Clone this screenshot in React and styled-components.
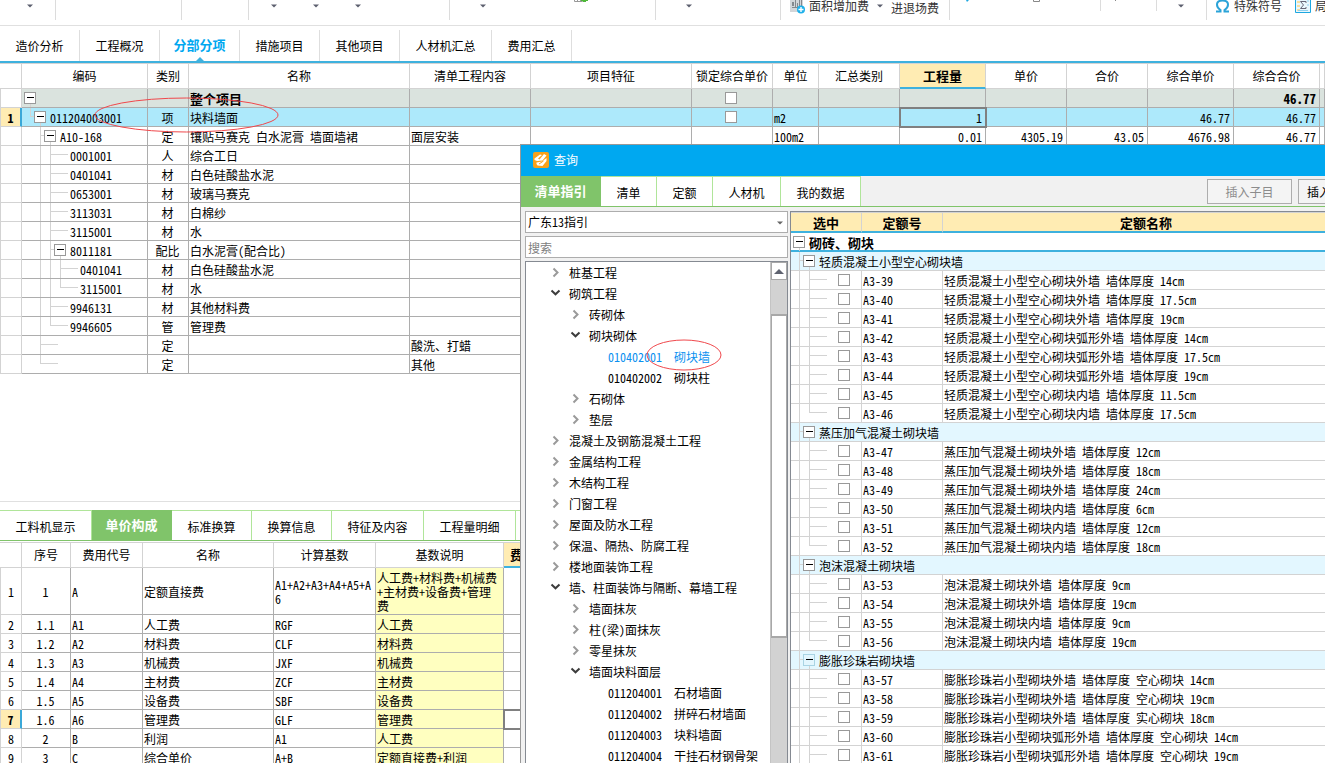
import React from "react";
import styled, { createGlobalStyle, css } from "styled-components";

const c = {
  sky: "#3eb1de",
  azure: "#00a8f0",
  green: "#80c46a",
  paleGreen: "#b0e59a",
  cream: "#ffecb3",
  line: "#adadad",
  light: "#d3d3d3",
};

const Global = createGlobalStyle`
  *, *::before, *::after { box-sizing: border-box; }
  body {
    margin: 0;
    background: #fff;
    color: #000;
    overflow: hidden;
    font-family: "Noto Sans Mono CJK SC", "Liberation Serif", "Noto Sans CJK SC", monospace;
    font-size: 12px;
    line-height: 18px;
  }
  button, input, select { font: inherit; color: inherit; margin: 0; padding: 0; }
`;

const Page = styled.div`
  position: relative;
  display: flex;
  flex-direction: column;
  height: 100vh;
  overflow: hidden;
`;

/* ---------- ribbon ---------- */

const Ribbon = styled.header`
  display: flex;
  flex: none;
  height: 26px;
  border-bottom: 1px solid #e0e0e0;
  overflow: hidden;
  color: #333;
`;

const RibbonGroup = styled.div`
  display: flex;
  flex: none;
  align-items: flex-start;
  width: ${(p) => p.$w}px;
  height: ${(p) => (p.$short ? 11 : 20)}px;
  border-right: 1px solid #dcdcdc;
  padding-left: ${(p) => p.$pad || 0}px;
  gap: ${(p) => p.$gap || 0}px;
`;

const RibbonTail = styled(RibbonGroup)`
  flex: 1 0 auto;
  border-right: 0;
  height: 20px;
`;

const RibbonButton = styled.button`
  display: flex;
  align-items: flex-start;
  flex: none;
  height: 16px;
  gap: 4px;
  border: 0;
  background: none;
  line-height: 12px;
  white-space: nowrap;
`;

const RibbonLabel = styled.span`
  line-height: ${(p) => (p.$low ? 16 : 12)}px;
`;

const CaretButton = styled.button`
  display: flex;
  flex: none;
  width: 6px;
  height: 8px;
  border: 0;
  background: none;
  padding-top: 4px;
`;

const Caret = () => (
  <CaretButton aria-label="展开">
    <svg width="6" height="4" viewBox="0 0 6 4">
      <path d="M0 0.500h6L3 3.500z" fill="#5c5f6e" />
    </svg>
  </CaretButton>
);

const SheetIcon = () => (
  <svg width="14" height="3" viewBox="0 0 14 3">
    <path d="M0.500 0v1.500h8V0M3.500 0v1M6.500 0v1" fill="none" stroke="#999" />
    <path d="M7 0h7v1h-2v1H9V1H7z" fill="#4fb83a" />
  </svg>
);

const AreaIcon = () => (
  <svg width="15" height="14" viewBox="0 0 15 14">
    <path d="M0 0h13v12H0z" fill="#d3d6d9" />
    <path d="M2 2h2v4H2zM5 0h1v7H5zM7 3h1v4H7zM9 0h1v6H9zM11 0h1v6h-1zM2 7h6v1H2z" fill="#84888d" />
    <circle cx="11" cy="9.500" r="4" fill="#1eb0ea" />
    <path d="M11 7v5M8.500 9.500h5" stroke="#fff" strokeWidth="1.400" />
  </svg>
);

const OmegaIcon = () => (
  <svg width="15" height="13" viewBox="0 0 15 13">
    <path
      d="M1 11.500h4.500V10C3 8.500 2 6.800 2 4.800 2 2 4.500 0.500 7.500 0.500S13 2 13 4.800c0 2-1 3.700-3.500 5.200v1.500H14"
      fill="none"
      stroke="#2ba3d8"
      strokeWidth="2"
    />
  </svg>
);

const SigmaIcon = () => (
  <svg width="16" height="13" viewBox="0 0 16 13">
    <path d="M0.500 0v12.500h15V0" fill="#e9f7fd" stroke="#1ea7e0" />
    <path d="M2 1h3v2H2zM2 5h3v2H2zM2 9h3v2H2z" fill="#f5dfa0" />
    <path d="M11 3V1.500H5.500L8.500 5l-3 3.500H11V7" fill="none" stroke="#667" />
    <path d="M12 1h2M12 5h2M3 10.500h10" stroke="#8fd0ee" />
  </svg>
);

/* ---------- tabs ---------- */

const MainTabs = styled.nav`
  display: flex;
  flex: none;
  height: 37px;
  padding-top: 4px;
  border-bottom: 2px solid ${c.sky};
`;

const MainTab = styled.button`
  position: relative;
  width: ${(p) => p.$w}px;
  height: 31px;
  border: 0;
  border-right: 1px solid #dedede;
  background: none;
  padding-top: 1px;
  ${(p) =>
    p.$active &&
    css`
      color: ${c.azure};
      font-weight: 700;
      font-size: 13px;
      padding: 0 0 1px;
      &::after {
        content: "";
        position: absolute;
        left: 50%;
        bottom: 0;
        margin-left: -4px;
        border: 4px solid transparent;
        border-top: 0;
        border-bottom-color: ${c.sky};
      }
    `}
`;

const GreenTabs = styled.nav`
  display: flex;
  flex: none;
  height: 31px;
  border-bottom: 1px solid ${c.green};
  ${(p) => p.$lined && `box-shadow: inset 0 1px 0 ${c.paleGreen};`}
`;

const GreenTab = styled.button`
  flex: none;
  width: ${(p) => p.$w}px;
  height: 30px;
  border: 0;
  border-top: 1px solid ${c.paleGreen};
  border-right: 1px solid ${c.paleGreen};
  background: #fff;
  padding-top: 3px;
  ${(p) =>
    p.$active &&
    css`
      background: ${c.green};
      border-color: ${c.green};
      color: #fff;
      font-weight: 700;
      font-size: 13px;
      padding: 0 0 1px;
    `}
`;

/* ---------- data grids ---------- */

const Grid = styled.table`
  width: 100%;
  table-layout: fixed;
  border-collapse: separate;
  border-spacing: 0;
  border-top: 1px solid ${c.light};
`;

const Head = styled.th`
  height: 25px;
  padding: 0;
  border-right: 1px solid ${c.light};
  border-bottom: 1px solid ${c.light};
  font-weight: 400;
  line-height: 18px;
  white-space: nowrap;
  overflow: hidden;
  ${(p) =>
    p.$hot &&
    css`
      background: ${c.cream};
      border-bottom: 2px solid ${c.sky};
      font-weight: 700;
      font-size: 13px;
    `}
`;

const Cell = styled.td`
  height: ${(p) => (p.$tall ? 47 : 19)}px;
  padding: ${(p) => (p.$tree ? "0" : p.$align === "right" ? "2px 3px 0 0" : "2px 2px 0 1px")};
  border-right: 1px solid ${c.line};
  border-bottom: 1px solid ${c.line};
  text-align: ${(p) => p.$align || "left"};
  line-height: ${(p) => (p.$tall ? 14 : 16)}px;
  white-space: ${(p) => (p.$tall ? "normal" : "pre")};
  word-break: break-all;
  overflow: hidden;
  vertical-align: middle;
  background: ${(p) => p.$bg || "transparent"};
  ${(p) => p.$focus && "outline: 2px solid #808080; outline-offset: -1px;"}
`;

const RowNumber = styled.th`
  padding: 2px 0 0;
  border-left: 1px solid ${c.light};
  border-right: 1px solid ${c.light};
  border-bottom: 1px solid ${c.light};
  font-weight: 400;
  line-height: 16px;
  ${(p) =>
    p.$active &&
    css`
      background: ${c.cream};
      border-right: 2px solid #3aa8d8;
      font-weight: 700;
    `}
`;

const Row = styled.tr`
  background: ${(p) => (p.$kind === "total" ? "#dae3de" : p.$kind === "selected" ? "#ade9fb" : "#fff")};
  ${(p) => p.$kind === "total" && "td { font-weight: 700; font-size: 13px; }"}
  ${RowNumber} { ${(p) => p.$kind === "total" && "background: #fff;"} }
`;

const Tick = styled.input.attrs({ type: "checkbox" })`
  appearance: none;
  display: block;
  flex: none;
  width: 12px;
  height: 12px;
  border: 1px solid #999;
  background: #fff;
`;

const TickCenter = styled.div`
  display: flex;
  align-items: center;
  justify-content: center;
  height: 18px;
  padding-right: 2px;
`;

const Branch = styled.div`
  display: flex;
  align-items: center;
  height: ${(p) => p.$height}px;
  white-space: pre;
  ${Tick} { margin-left: 9px; }
`;

const BranchText = styled.span`
  padding-top: 2px;
  line-height: 16px;
`;

const Guides = styled.svg`
  display: block;
  flex: none;
`;

const Toggle = styled.button`
  display: block;
  flex: none;
  width: 16px;
  height: 18px;
  border: 0;
  background: none;
`;

/* Connector lines: "v" passes through, "t" branches, "l" ends in an elbow. */
function Tree({ rails, open, pale, height = 18, text, children }) {
  const depth = rails.length;
  const width = (open ? 2 : 18) + depth * 10;
  const reach = open ? 5 : 18;
  return (
    <Branch $height={height}>
      <Guides width={width} height="18" viewBox={`0 0 ${width} 18`}>
        {rails.split("").map((r, i) => {
          const x = 8 + i * 10;
          if (r === " ") return null;
          return (
            <path
              key={i}
              d={`M${x + 0.5} 0V${r === "l" ? 9 : 18}` + (r === "v" ? "" : `M${x} 8.5h${reach}`)}
              fill="none"
              stroke={c.light}
            />
          );
        })}
      </Guides>
      {open && (
        <Toggle aria-label="收起">
          <svg width="16" height="18" viewBox="0 0 16 18">
            <path d="M6.500 15v3" stroke={c.light} />
            <rect x="0.500" y="3.500" width="11" height="11" fill={pale ? "#e3f6fe" : "#fff"} stroke={pale ? "#a9d4e4" : "#999"} />
            <path d="M3 8.500h7" stroke="#000" />
          </svg>
        </Toggle>
      )}
      {text && <BranchText>{text}</BranchText>}
      {children}
    </Branch>
  );
}

const itemCols = [22, 126, 41, 221, 121, 161, 81, 46, 81, 86, 81, 81, 86, 86];
const itemHeads = ["", "编码", "类别", "名称", "清单工程内容", "项目特征", "锁定综合单价", "单位", "汇总类别", "工程量", "单价", "合价", "综合单价", "综合合价", ""];

const items = [
  { kind: "total", rails: "", open: true, name: "整个项目", tick: true, sum: "46.77" },
  { kind: "selected", no: "1", rails: "l", open: true, code: "011204003001", type: "项", name: "块料墙面", tick: true, unit: "m2", qty: "1", comp: "46.77", sum: "46.77" },
  { rails: " t", open: true, code: "A10-168", type: "定", name: "镶贴马赛克 白水泥膏 墙面墙裙", work: "面层安装", unit: "100m2", qty: "0.01", price: "4305.19", total: "43.05", comp: "4676.98", sum: "46.77" },
  { rails: " vt", code: "0001001", type: "人", name: "综合工日" },
  { rails: " vt", code: "0401041", type: "材", name: "白色硅酸盐水泥" },
  { rails: " vt", code: "0653001", type: "材", name: "玻璃马赛克" },
  { rails: " vt", code: "3113031", type: "材", name: "白棉纱" },
  { rails: " vt", code: "3115001", type: "材", name: "水" },
  { rails: " vt", open: true, code: "8011181", type: "配比", name: "白水泥膏(配合比)" },
  { rails: " vvt", code: "0401041", type: "材", name: "白色硅酸盐水泥" },
  { rails: " vvl", code: "3115001", type: "材", name: "水" },
  { rails: " vt", code: "9946131", type: "材", name: "其他材料费" },
  { rails: " vl", code: "9946605", type: "管", name: "管理费" },
  { rails: " t", type: "定", work: "酸洗、打蜡" },
  { rails: " l", type: "定", work: "其他" },
];

const ItemsArea = styled.main`
  flex: 1 1 0;
  min-height: 0;
  overflow: hidden;
`;

function ItemsGrid() {
  return (
    <Grid>
      <colgroup>
        {itemCols.map((w, i) => <col key={i} style={{ width: w }} />)}
        <col />
      </colgroup>
      <thead>
        <tr>
          {itemHeads.map((h, i) => <Head key={i} $hot={h === "工程量"}>{h}</Head>)}
        </tr>
      </thead>
      <tbody>
        {items.map((r, i) => (
          <Row key={i} $kind={r.kind}>
            <RowNumber $active={!!r.no}>{r.no}</RowNumber>
            <Cell $tree><Tree rails={r.rails} open={r.open} text={r.code} /></Cell>
            <Cell $align="center">{r.type}</Cell>
            <Cell>{r.name}</Cell>
            <Cell>{r.work}</Cell>
            <Cell />
            <Cell $tree>{r.tick && <TickCenter><Tick aria-label="锁定综合单价" /></TickCenter>}</Cell>
            <Cell>{r.unit}</Cell>
            <Cell />
            <Cell $align="right" $focus={r.kind === "selected"}>{r.qty}</Cell>
            <Cell $align="right">{r.price}</Cell>
            <Cell $align="right">{r.total}</Cell>
            <Cell $align="right">{r.comp}</Cell>
            <Cell $align="right">{r.sum}</Cell>
            <Cell />
          </Row>
        ))}
      </tbody>
    </Grid>
  );
}

/* ---------- price breakdown ---------- */

const Breakdown = styled.section`
  flex: none;
  display: flex;
  flex-direction: column;
  height: 262px;
  padding-top: 8px;
  border-top: 1px solid #e0e0e0;
  overflow: hidden;
  ${Grid} { margin-top: 1px; }
`;

const feeCols = [22, 49, 72, 131, 102, 128, 39];
const feeHeads = ["", "序号", "费用代号", "名称", "计算基数", "基数说明", "费率", ""];
const fees = [
  ["1", "A", "定额直接费", "A1+A2+A3+A4+A5+A6", "人工费+材料费+机械费+主材费+设备费+管理费"],
  ["1.1", "A1", "人工费", "RGF", "人工费"],
  ["1.2", "A2", "材料费", "CLF", "材料费"],
  ["1.3", "A3", "机械费", "JXF", "机械费"],
  ["1.4", "A4", "主材费", "ZCF", "主材费"],
  ["1.5", "A5", "设备费", "SBF", "设备费"],
  ["1.6", "A6", "管理费", "GLF", "管理费"],
  ["2", "B", "利润", "A1", "人工费"],
  ["3", "C", "综合单价", "A+B", "定额直接费+利润"],
];

function FeeGrid() {
  return (
    <Grid>
      <colgroup>
        {feeCols.map((w, i) => <col key={i} style={{ width: w }} />)}
        <col />
      </colgroup>
      <thead>
        <tr>
          {feeHeads.map((h, i) => <Head key={i} $hot={h === "费率"}>{h}</Head>)}
        </tr>
      </thead>
      <tbody>
        {fees.map(([no, code, name, base, note], i) => (
          <Row key={no}>
            <RowNumber $active={i === 6}>{i + 1}</RowNumber>
            <Cell $align="center">{no}</Cell>
            <Cell>{code}</Cell>
            <Cell>{name}</Cell>
            <Cell $tall={i === 0}>{base}</Cell>
            <Cell $tall={i === 0} $bg="#ffffc0">{note}</Cell>
            <Cell $focus={i === 6} />
            <Cell />
          </Row>
        ))}
      </tbody>
    </Grid>
  );
}

/* ---------- query window ---------- */

const Dialog = styled.section`
  position: absolute;
  top: 144px;
  left: 520px;
  right: -45px;
  bottom: 0;
  display: flex;
  flex-direction: column;
  border-top: 1px solid #999;
  border-left: 1px solid #999;
  background: #f1f1f1;
  overflow: hidden;
`;

const TitleBar = styled.header`
  display: flex;
  flex: none;
  align-items: center;
  gap: 5px;
  height: 31px;
  padding: 0 0 1px 12px;
  background: ${c.azure};
  color: #fff;
`;

const Title = styled.h1`
  margin: 0;
  font-size: 12px;
  font-weight: 400;
`;

const Logo = () => (
  <svg width="16" height="16" viewBox="0 0 16 16">
    <rect width="16" height="16" rx="2" fill="#f9a11b" />
    <path d="M1.500 6.500 7 2.500 9 3 5 6.500 6.500 7.500 11 2 13.500 3.500 9.500 8.500 4 9 1.500 8z" fill="#fff" />
    <path d="M3.500 10.500 9 9.500 13.500 6v3L9.500 14 4.500 13.500 3.500 12z" fill="#fff" />
    <path d="M6 12 10.500 9" stroke="#f9a11b" />
  </svg>
);

const DialogActions = styled.div`
  display: flex;
  gap: 6px;
  margin-left: auto;
  padding: 3px 6px 0 0;
`;

const ActionButton = styled.button`
  width: ${(p) => p.$w}px;
  height: 25px;
  border: 1px solid ${c.line};
  background: #f4f4f4;
  &:disabled { color: #8c8c8c; }
`;

const DialogBody = styled.div`
  display: flex;
  flex: 1;
  min-height: 0;
  gap: 2px;
  padding: 4px 0 0 4px;
`;

const Guide = styled.aside`
  display: flex;
  flex: none;
  flex-direction: column;
  gap: 3px;
  width: 263px;
`;

const SelectBox = styled.div`
  position: relative;
  display: flex;
  flex: none;
  svg { position: absolute; right: 5px; top: 10px; pointer-events: none; }
`;

const Select = styled.select`
  appearance: none;
  width: 100%;
  height: 22px;
  border: 1px solid ${c.line};
  border-radius: 0;
  background: #fff;
  padding-left: 2px;
`;

const Search = styled.input`
  flex: none;
  height: 22px;
  border: 1px solid ${c.line};
  background: #fff;
  padding-left: 2px;
  &::placeholder { color: #808080; opacity: 1; }
`;

const TreePane = styled.div`
  display: flex;
  flex: 1;
  min-height: 0;
  border: 1px solid #858a92;
  border-bottom: 0;
  background: #fff;
`;

const TreeList = styled.ul`
  flex: 1;
  margin: 0;
  padding: 0;
  list-style: none;
  overflow: hidden;
`;

const TreeItem = styled.li`
  display: flex;
  align-items: center;
  height: 21px;
  padding-left: ${(p) => [24, 44, 82][p.$level]}px;
  white-space: pre;
  color: ${(p) => (p.$selected ? "#0a90f0" : "#000")};
`;

const ItemCode = styled.span`
  flex: none;
  width: 66px;
`;

const Fold = styled.button`
  display: flex;
  flex: none;
  width: 19px;
  height: 12px;
  border: 0;
  background: none;
`;

const ScrollBar = styled.div`
  display: flex;
  flex: none;
  flex-direction: column;
  width: 17px;
  background: #d2d2d2;
  border-left: 1px solid #c4c4c4;
`;

const ScrollButton = styled.button`
  flex: none;
  display: flex;
  justify-content: center;
  align-items: center;
  height: 18px;
  border: 1px solid #a8a8a8;
  background: #fff;
`;

const ScrollThumb = styled.div`
  flex: none;
  height: 324px;
  margin-top: 34px;
  border: 1px solid #a8a8a8;
  border-width: 2px 1px;
  background: #fff;
`;

const guide = [
  [0, "closed", "桩基工程"],
  [0, "open", "砌筑工程"],
  [1, "closed", "砖砌体"],
  [1, "open", "砌块砌体"],
  [2, "010402001", "砌块墙", true],
  [2, "010402002", "砌块柱"],
  [1, "closed", "石砌体"],
  [1, "closed", "垫层"],
  [0, "closed", "混凝土及钢筋混凝土工程"],
  [0, "closed", "金属结构工程"],
  [0, "closed", "木结构工程"],
  [0, "closed", "门窗工程"],
  [0, "closed", "屋面及防水工程"],
  [0, "closed", "保温、隔热、防腐工程"],
  [0, "closed", "楼地面装饰工程"],
  [0, "open", "墙、柱面装饰与隔断、幕墙工程"],
  [1, "closed", "墙面抹灰"],
  [1, "closed", "柱(梁)面抹灰"],
  [1, "closed", "零星抹灰"],
  [1, "open", "墙面块料面层"],
  [2, "011204001", "石材墙面"],
  [2, "011204002", "拼碎石材墙面"],
  [2, "011204003", "块料墙面"],
  [2, "011204004", "干挂石材钢骨架"],
];

const QuotaPane = styled.div`
  flex: 1;
  min-width: 0;
  border-top: 1px solid #858a92;
  border-left: 1px solid #858a92;
  background: #fff;
  overflow: hidden;
`;

const QuotaGrid = styled(Grid)`
  ${Head} { height: 20px; line-height: 16px; padding-top: 1px; }
  ${Cell} { border-color: ${c.light}; }
`;

const CategoryCell = styled.td`
  padding: 0;
  border-bottom: 2px solid ${c.sky};
  font-weight: 700;
  font-size: 13px;
`;

const GroupCell = styled.td`
  padding: 0;
  border-bottom: 1px solid ${c.light};
  background: #e3f7ff;
`;

const cm = (name, list) => list.map((t) => `${name} 墙体厚度 ${t}`);

const groups = [
  {
    name: "轻质混凝土小型空心砌块墙",
    start: 39,
    rows: [
      ...cm("轻质混凝土小型空心砌块外墙", ["14cm", "17.5cm", "19cm"]),
      ...cm("轻质混凝土小型空心砌块弧形外墙", ["14cm", "17.5cm", "19cm"]),
      ...cm("轻质混凝土小型空心砌块内墙", ["11.5cm", "17.5cm"]),
    ],
  },
  {
    name: "蒸压加气混凝土砌块墙",
    start: 47,
    rows: [
      ...cm("蒸压加气混凝土砌块外墙", ["12cm", "18cm", "24cm"]),
      ...cm("蒸压加气混凝土砌块内墙", ["6cm", "12cm", "18cm"]),
    ],
  },
  {
    name: "泡沫混凝土砌块墙",
    start: 53,
    rows: [...cm("泡沫混凝土砌块外墙", ["9cm", "19cm"]), ...cm("泡沫混凝土砌块内墙", ["9cm", "19cm"])],
  },
  {
    name: "膨胀珍珠岩砌块墙",
    start: 57,
    pale: true,
    rows: [
      ...cm("膨胀珍珠岩小型砌块外墙", ["空心砌块 14cm", "空心砌块 19cm", "实心砌块 18cm"]),
      ...cm("膨胀珍珠岩小型砌块弧形外墙", ["空心砌块 14cm", "空心砌块 19cm"]),
    ],
  },
];

function Quotas() {
  return (
    <QuotaPane>
      <QuotaGrid>
        <colgroup>
          <col style={{ width: 71 }} />
          <col style={{ width: 81 }} />
          <col />
          <col style={{ width: 20 }} />
        </colgroup>
        <thead>
          <tr>
            <Head $hot>选中</Head>
            <Head $hot>定额号</Head>
            <Head $hot>定额名称</Head>
            <Head $hot />
          </tr>
        </thead>
        <tbody>
          <tr>
            <CategoryCell colSpan={4}><Tree rails="" open height={17} text="砌砖、砌块" /></CategoryCell>
          </tr>
          {groups.map((g) => (
            <React.Fragment key={g.start}>
              <tr>
                <GroupCell colSpan={4}><Tree rails="t" open pale={g.pale} text={g.name} /></GroupCell>
              </tr>
              {g.rows.map((name, i) => {
                const code = `A3-${g.start + i}`;
                return (
                  <tr key={code}>
                    <Cell $tree>
                      <Tree rails={!g.pale && i === g.rows.length - 1 ? "vl" : "vt"}>
                        <Tick aria-label={code} />
                      </Tree>
                    </Cell>
                    <Cell>{code}</Cell>
                    <Cell>{name}</Cell>
                    <Cell />
                  </tr>
                );
              })}
            </React.Fragment>
          ))}
        </tbody>
      </QuotaGrid>
    </QuotaPane>
  );
}

function QueryDialog() {
  return (
    <Dialog aria-label="查询">
      <TitleBar>
        <Logo />
        <Title>查询</Title>
      </TitleBar>
      <GreenTabs>
        <GreenTab $w={80} $active>清单指引</GreenTab>
        <GreenTab $w={56}>清单</GreenTab>
        <GreenTab $w={56}>定额</GreenTab>
        <GreenTab $w={68}>人材机</GreenTab>
        <GreenTab $w={80}>我的数据</GreenTab>
        <DialogActions>
          <ActionButton $w={85} disabled>插入子目</ActionButton>
          <ActionButton $w={66}>插入清单</ActionButton>
        </DialogActions>
      </GreenTabs>
      <DialogBody>
        <Guide>
          <SelectBox>
            <Select aria-label="指引" defaultValue="gd13">
              <option value="gd13">广东13指引</option>
            </Select>
            <svg width="6" height="4" viewBox="0 0 6 4">
              <path d="M0 0.500h6L3 3.500z" fill="#666" />
            </svg>
          </SelectBox>
          <Search aria-label="搜索" placeholder="搜索" />
          <TreePane>
            <TreeList>
              {guide.map(([level, key, name, selected]) => (
                <TreeItem key={key + name} $level={level} $selected={selected}>
                  {level === 2 ? (
                    <ItemCode>{key}</ItemCode>
                  ) : (
                    <Fold aria-label={key === "open" ? "收起" : "展开"}>
                      <svg width="12" height="11" viewBox="0 0 12 11">
                        {key === "open" ? (
                          <path d="M1.500 2.500 5.500 6.300 9.500 2.500" fill="none" stroke="#3c3c3c" strokeWidth="2" />
                        ) : (
                          <path d="M3.500 1.500 7.500 5.500 3.500 9.500" fill="none" stroke="#9a9a9a" strokeWidth="2" />
                        )}
                      </svg>
                    </Fold>
                  )}
                  {name}
                </TreeItem>
              ))}
            </TreeList>
            <ScrollBar>
              <ScrollButton aria-label="向上滚动">
                <svg width="10" height="5" viewBox="0 0 10 5">
                  <path d="M0 5 5 0l5 5z" fill="#5f6370" />
                </svg>
              </ScrollButton>
              <ScrollThumb />
            </ScrollBar>
          </TreePane>
        </Guide>
        <Quotas />
      </DialogBody>
    </Dialog>
  );
}

/* Annotation rings lying over the windows */
const Mark = styled.svg`
  position: absolute;
  left: ${(p) => p.$x}px;
  top: ${(p) => p.$y}px;
  pointer-events: none;
`;

function Ring({ x, y, w, h }) {
  return (
    <Mark $x={x} $y={y} width={w} height={h} viewBox={`0 0 ${w} ${h}`}>
      <ellipse cx={w / 2} cy={h / 2} rx={w / 2 - 1} ry={h / 2 - 1} fill="none" stroke="#f0484c" />
    </Mark>
  );
}

export default function App() {
  return (
    <>
      <Global />
      <Page>
        <Ribbon>
          <RibbonGroup $w={56} $pad={27}><Caret /></RibbonGroup>
          <RibbonGroup $w={126} />
          <RibbonGroup $w={67} />
          <RibbonGroup $w={201} $pad={22} $gap={36}><Caret /><Caret /><Caret /></RibbonGroup>
          <RibbonGroup $w={206} $pad={30} $gap={88}><Caret /><SheetIcon /></RibbonGroup>
          <RibbonGroup $w={125} $pad={30}><Caret /></RibbonGroup>
          <RibbonGroup $w={169} $pad={9} $gap={8}>
            <RibbonButton><AreaIcon /><RibbonLabel>面积增加费</RibbonLabel></RibbonButton>
            <Caret />
            <RibbonButton><RibbonLabel $low>进退场费</RibbonLabel></RibbonButton>
          </RibbonGroup>
          <RibbonGroup $w={151} $short $pad={16} $gap={64}>
            <svg width="3" height="2"><path d="M0 0h3L1 2z" fill="#1ea7e0" /></svg>
            <svg width="7" height="2"><path d="M0.500 0v1.500h6V0" fill="none" stroke="#888" /></svg>
          </RibbonGroup>
          <RibbonGroup $w={56} $short $pad={14}>
            <svg width="2" height="2"><path d="M0.500 0v1" stroke="#888" /></svg>
          </RibbonGroup>
          <RibbonGroup $w={50} $pad={21}><Caret /></RibbonGroup>
          <RibbonTail $w={118} $pad={8} $gap={13}>
            <RibbonButton><OmegaIcon /><RibbonLabel>特殊符号</RibbonLabel></RibbonButton>
            <RibbonButton><SigmaIcon /><RibbonLabel>局部汇总</RibbonLabel></RibbonButton>
          </RibbonTail>
        </Ribbon>
        <MainTabs>
          <MainTab $w={80}>造价分析</MainTab>
          <MainTab $w={80}>工程概况</MainTab>
          <MainTab $w={80} $active>分部分项</MainTab>
          <MainTab $w={80}>措施项目</MainTab>
          <MainTab $w={80}>其他项目</MainTab>
          <MainTab $w={92}>人材机汇总</MainTab>
          <MainTab $w={80}>费用汇总</MainTab>
        </MainTabs>
        <ItemsArea>
          <ItemsGrid />
        </ItemsArea>
        <Breakdown>
          <GreenTabs $lined>
            <GreenTab $w={92}>工料机显示</GreenTab>
            <GreenTab $w={80} $active>单价构成</GreenTab>
            <GreenTab $w={80}>标准换算</GreenTab>
            <GreenTab $w={80}>换算信息</GreenTab>
            <GreenTab $w={92}>特征及内容</GreenTab>
            <GreenTab $w={92}>工程量明细</GreenTab>
          </GreenTabs>
          <FeeGrid />
        </Breakdown>
        <QueryDialog />
        <Ring x={94} y={97} w={185} h={36} />
        <Ring x={646} y={339} w={76} h={32} />
      </Page>
    </>
  );
}
